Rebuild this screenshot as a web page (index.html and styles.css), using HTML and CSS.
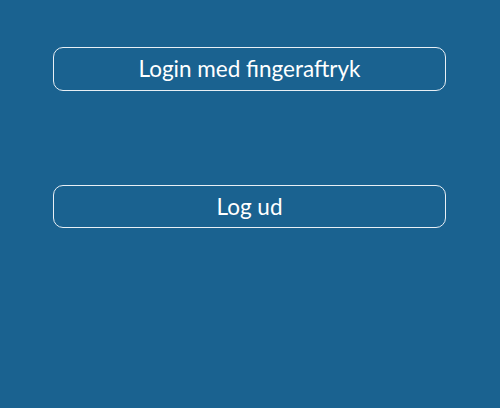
FILE: index.html
```html
<!DOCTYPE html>
<html>
<head>
<meta charset="utf-8">
<link rel="stylesheet" href="styles.css">
</head>
<body>
<div class="page">
  <button class="btn">Login med fingeraftryk</button>
  <button class="btn">Log ud</button>
</div>
</body>
</html>
```
FILE: styles.css
```css
html, body {
  margin: 0;
  padding: 0;
  background: #1a6290;
  height: 100%;
}
.page {
  display: flex;
  flex-direction: column;
  gap: 94px;
  padding: 47px 54px 0 53px;
}
.btn {
  height: 43.5px;
  width: 100%;
  box-sizing: border-box;
  background: transparent;
  border: 1.5px solid #e8eff5;
  border-radius: 10px;
  color: #ffffff;
  font-family: Lato, "Open Sans", sans-serif;
  font-size: 22.5px;
  padding: 0;
  cursor: pointer;
}
```
